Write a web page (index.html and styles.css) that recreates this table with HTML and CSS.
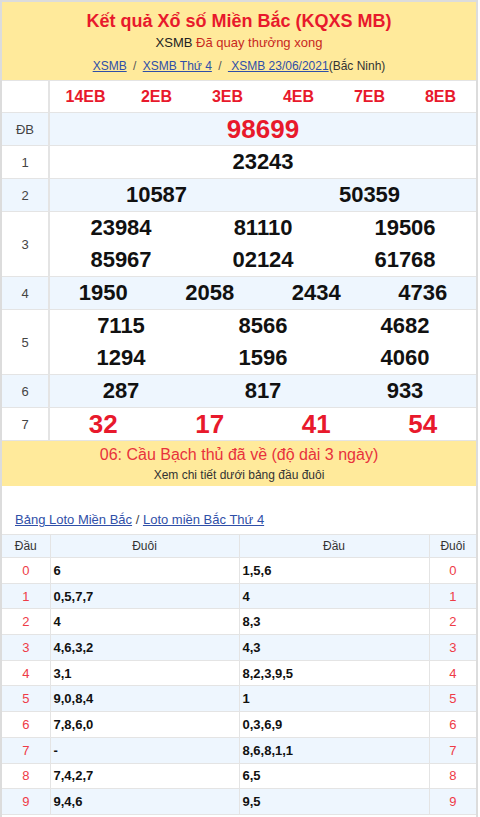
FILE: index.html
```html
<!DOCTYPE html>
<html lang="vi">
<head>
<meta charset="utf-8">
<title>KQXS MB</title>
<link rel="stylesheet" href="styles.css">
</head>
<body>
<div class="page">
  <header class="head">
    <h1 class="title">Kết quả Xổ số Miền Bắc (KQXS MB)</h1>
    <div class="sub"><span class="dark">XSMB</span> Đã quay thưởng xong</div>
    <div class="crumbs"><a href="#">XSMB</a> <span class="sep">/</span> <a href="#">XSMB Thứ 4</a> <span class="sep">/</span> <a href="#">&nbsp;XSMB 23/06/2021</a>(Bắc Ninh)</div>
  </header>

  <div class="results">
    <div class="row">
      <div class="lbl"></div>
      <div class="cells codes"><span>14EB</span><span>2EB</span><span>3EB</span><span>4EB</span><span>7EB</span><span>8EB</span></div>
    </div>
    <div class="row alt">
      <div class="lbl">ĐB</div>
      <div class="cells special"><span>98699</span></div>
    </div>
    <div class="row">
      <div class="lbl">1</div>
      <div class="cells"><span>23243</span></div>
    </div>
    <div class="row alt">
      <div class="lbl">2</div>
      <div class="cells"><span>10587</span><span>50359</span></div>
    </div>
    <div class="row">
      <div class="lbl">3</div>
      <div class="cells grid3"><span>23984</span><span>81110</span><span>19506</span><span>85967</span><span>02124</span><span>61768</span></div>
    </div>
    <div class="row alt">
      <div class="lbl">4</div>
      <div class="cells"><span>1950</span><span>2058</span><span>2434</span><span>4736</span></div>
    </div>
    <div class="row">
      <div class="lbl">5</div>
      <div class="cells grid3"><span>7115</span><span>8566</span><span>4682</span><span>1294</span><span>1596</span><span>4060</span></div>
    </div>
    <div class="row alt">
      <div class="lbl">6</div>
      <div class="cells"><span>287</span><span>817</span><span>933</span></div>
    </div>
    <div class="row">
      <div class="lbl">7</div>
      <div class="cells seven"><span>32</span><span>17</span><span>41</span><span>54</span></div>
    </div>
  </div>

  <div class="notice">
    <div class="notice-main">06: Cầu Bạch thủ đã về (độ dài 3 ngày)</div>
    <div class="notice-sub">Xem chi tiết dưới bảng đầu đuôi</div>
  </div>

  <div class="loto-links"><a href="#">Bảng Loto Miền Bắc</a> / <a href="#">Loto miền Bắc Thứ 4</a></div>

  <table class="loto">
    <colgroup>
      <col class="w1"><col class="w2"><col class="w3"><col class="w4">
    </colgroup>
    <thead>
      <tr><th>Đầu</th><th>Đuôi</th><th>Đầu</th><th>Đuôi</th></tr>
    </thead>
    <tbody>
      <tr><td class="n">0</td><td class="v">6</td><td class="v">1,5,6</td><td class="n">0</td></tr>
      <tr><td class="n">1</td><td class="v">0,5,7,7</td><td class="v">4</td><td class="n">1</td></tr>
      <tr><td class="n">2</td><td class="v">4</td><td class="v">8,3</td><td class="n">2</td></tr>
      <tr><td class="n">3</td><td class="v">4,6,3,2</td><td class="v">4,3</td><td class="n">3</td></tr>
      <tr><td class="n">4</td><td class="v">3,1</td><td class="v">8,2,3,9,5</td><td class="n">4</td></tr>
      <tr><td class="n">5</td><td class="v">9,0,8,4</td><td class="v">1</td><td class="n">5</td></tr>
      <tr><td class="n">6</td><td class="v">7,8,6,0</td><td class="v">0,3,6,9</td><td class="n">6</td></tr>
      <tr><td class="n">7</td><td class="v">-</td><td class="v">8,6,8,1,1</td><td class="n">7</td></tr>
      <tr><td class="n">8</td><td class="v">7,4,2,7</td><td class="v">6,5</td><td class="n">8</td></tr>
      <tr><td class="n">9</td><td class="v">9,4,6</td><td class="v">9,5</td><td class="n">9</td></tr>
    </tbody>
  </table>
</div>
</body>
</html>
```

FILE: styles.css
```css
* { box-sizing: border-box; }
html, body { margin: 0; padding: 0; background: #fff; }
body {
  font-family: "Liberation Sans", Arial, sans-serif;
  color: #222;
}
.page {
  width: 478px;
  border: 2px solid #dcdcdc;
  border-bottom: none;
  min-height: 817px;
}
a { color: #2f4fa8; text-decoration: underline; }

.head {
  background: #ffea9b;
  text-align: center;
  padding: 7px 0 4px;
}
.title {
  margin: 0;
  font-size: 18px;
  line-height: 24px;
  font-weight: bold;
  color: #e8192c;
}
.sub {
  font-size: 13px;
  line-height: 20px;
  color: #c8281e;
}
.sub .dark { color: #222; }
.crumbs {
  margin-top: 3px;
  font-size: 12px;
  line-height: 20px;
  color: #333;
}
.crumbs .sep { color: #555; margin: 0 3px; }

.results { border-top: 1px solid #e4e4e4; }
.row {
  display: flex;
  border-bottom: 1px solid #e4e4e4;
  background: #fff;
}
.row.alt { background: #eef6fe; }
.lbl {
  width: 48px;
  flex: none;
  border-right: 2px solid #e4e4e4;
  display: flex;
  align-items: center;
  justify-content: center;
  font-size: 13px;
  color: #444;
}
.cells {
  flex: 1;
  display: flex;
  align-items: center;
}
.cells span {
  flex: 1;
  text-align: center;
  font-size: 22px;
  line-height: 32px;
  font-weight: bold;
  color: #111;
}
.cells.grid3 {
  display: grid;
  grid-template-columns: 1fr 1fr 1fr;
}
.cells.codes span {
  font-size: 16px;
  color: #e8192c;
  line-height: 31px;
}
.cells.special span {
  font-size: 26px;
  color: #e8192c;
}
.cells.seven span {
  font-size: 26px;
  color: #e8192c;
}

.notice {
  background: #ffea9b;
  text-align: center;
  padding: 3px 0 2px;
}
.notice-main {
  font-size: 16px;
  line-height: 22px;
  color: #e8323c;
}
.notice-sub {
  font-size: 12px;
  line-height: 18px;
  color: #333;
}

.loto-links {
  padding: 24px 0 4px 13px;
  font-size: 13px;
  line-height: 20px;
  color: #444;
}

.loto {
  width: 474px;
  table-layout: fixed;
  border-collapse: collapse;
  font-size: 13px;
}
.loto .w1 { width: 48px; }
.loto .w2 { width: 189px; }
.loto .w3 { width: 190px; }
.loto .w4 { width: 47px; }
.loto th, .loto td {
  border: 1px solid #e4e4e4;
  padding: 0 3px;
}
.loto tr > :first-child { border-left: none; }
.loto tr > :last-child { border-right: none; }
.loto th {
  height: 23px;
  background: #eef6fe;
  font-weight: normal;
  color: #333;
  font-size: 12px;
}
.loto td { height: 25.7px; }
.loto tbody tr:nth-child(even) { background: #eef6fe; }
.loto td.n { text-align: center; color: #ee3b47; }
.loto td.v { font-weight: bold; color: #111; }
```
